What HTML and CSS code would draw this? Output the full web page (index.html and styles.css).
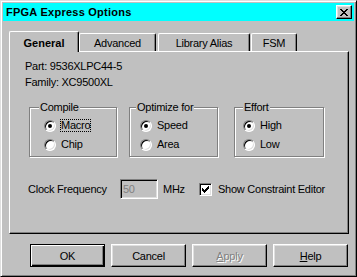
FILE: index.html
```html
<!DOCTYPE HTML>
<html>

<head>
    <meta charset="utf-8">
    <link rel="stylesheet" href="styles.css">
</head>

<body>
    <div class="window">
        <div class="titlebar">
            <span class="title">FPGA Express Options</span>
            <span class="close-btn">
                <svg width="8" height="7" viewBox="0 0 8 7">
                    <path d="M0 0h2v1H0z M6 0h2v1H6z M1 1h2v1H1z M5 1h2v1H5z M2 2h4v1H2z M3 3h2v1H3z M2 4h4v1H2z M1 5h2v1H1z M5 5h2v1H5z M0 6h2v1H0z M6 6h2v1H6z" fill="#000"/>
                </svg>
            </span>
        </div>

        <div class="tabs">
            <span class="tab tab-on">General</span>
            <span class="tab tab-adv">Advanced</span>
            <span class="tab tab-lib">Library Alias</span>
            <span class="tab tab-fsm">FSM</span>
        </div>

        <div class="panel">
            <div class="info">
                <div>Part: 9536XLPC44-5</div>
                <div>Family: XC9500XL</div>
            </div>

            <div class="groups">
                <div class="group g-compile">
                    <span class="group-label">Compile</span>
                    <div class="opt"><span class="radio on"></span><span class="opt-text focus">Macro</span></div>
                    <div class="opt"><span class="radio"></span><span class="opt-text">Chip</span></div>
                </div>
                <div class="group g-opt">
                    <span class="group-label">Optimize for</span>
                    <div class="opt"><span class="radio on"></span><span class="opt-text">Speed</span></div>
                    <div class="opt"><span class="radio"></span><span class="opt-text">Area</span></div>
                </div>
                <div class="group g-effort">
                    <span class="group-label">Effort</span>
                    <div class="opt"><span class="radio on"></span><span class="opt-text">High</span></div>
                    <div class="opt"><span class="radio"></span><span class="opt-text">Low</span></div>
                </div>
            </div>

            <div class="freq">
                <span class="freq-label">Clock Frequency</span>
                <span class="edit">50</span>
                <span class="unit">MHz</span>
                <span class="check">
                    <svg width="7" height="7" viewBox="0 0 7 7">
                        <path d="M6 0h1v1H6z M5 1h2v1H5z M0 2h1v1H0z M4 2h3v1H4z M0 3h2v1H0z M3 3h3v1H3z M0 4h5v1H0z M1 5h3v1H1z M2 6h1v1H2z" fill="#000"/>
                    </svg>
                </span>
                <span class="check-text">Show Constraint Editor</span>
            </div>
        </div>

        <div class="buttons">
            <button class="btn btn-default">OK</button>
            <button class="btn">Cancel</button>
            <button class="btn btn-off"><u>A</u>pply</button>
            <button class="btn"><u>H</u>elp</button>
        </div>
    </div>
</body>

</html>
```

FILE: styles.css
```css
body {
    margin: 0;
    font-family: "Liberation Sans", Arial, sans-serif;
    font-size: 11px;
    letter-spacing: -0.25px;
    color: #000;
}

.window {
    width: 357px;
    height: 277px;
    box-sizing: border-box;
    background: #c0c0c0;
    border: 1px solid;
    border-color: #dfdfdf #000 #000 #dfdfdf;
    box-shadow: inset 1px 1px #fff, inset -1px -1px #808080;
    padding: 2px;
}

/* title bar */
.titlebar {
    height: 18px;
    background: #0ff;
    display: flex;
    align-items: center;
    justify-content: space-between;
    padding: 0 2px 0 3px;
}
.title {
    font-weight: bold;
    letter-spacing: 0.25px;
}
.close-btn {
    width: 16px;
    height: 14px;
    box-sizing: border-box;
    background: #c0c0c0;
    border: 1px solid;
    border-color: #fff #000 #000 #fff;
    box-shadow: inset -1px -1px #808080, inset 1px 1px #dfdfdf;
    display: flex;
    align-items: center;
    justify-content: center;
}

/* tabs */
.tabs {
    display: flex;
    align-items: flex-end;
    height: 20px;
    margin: 10px 0 0 6px;
}
.tab {
    height: 18px;
    box-sizing: border-box;
    padding-top: 1px;
    border: 1px solid;
    border-bottom: 0;
    border-color: #fff #000 #000 #fff;
    border-radius: 2px 2px 0 0;
    box-shadow: inset -1px 0 #808080;
    display: flex;
    align-items: center;
    justify-content: center;
}
.tab-on {
    width: 70px;
    height: 21px;
    padding-top: 2px;
    margin-bottom: -1px;
    position: relative;
    z-index: 1;
    background: #c0c0c0;
    font-weight: bold;
    letter-spacing: 0;
}
.tab-adv {
    width: 77px;
}
.tab-lib {
    width: 92px;
    margin-left: 2px;
}
.tab-fsm {
    width: 46px;
    margin-left: 1px;
}

.panel {
    width: 340px;
    height: 183px;
    box-sizing: border-box;
    margin-left: 6px;
    border: 1px solid;
    border-color: #fff #000 #000 #fff;
    box-shadow: inset -1px -1px #808080;
}

.info {
    padding: 6px 0 0 15px;
    line-height: 16px;
}

/* group boxes */
.groups {
    display: flex;
    margin-top: 17px;
}
.group {
    position: relative;
    height: 50px;
    box-sizing: border-box;
    border: 1px solid #808080;
    box-shadow: inset 1px 1px #fff, 1px 1px #fff;
    padding-top: 8px;
}
.group-label {
    position: absolute;
    top: -7px;
    line-height: 13px;
    padding: 0 1px;
    background: #c0c0c0;
}
.g-compile {
    width: 88px;
    margin-left: 19px;
    padding-left: 14px;
}
.g-compile .group-label {
    left: 9px;
}
.g-opt {
    width: 89px;
    margin-left: 12px;
    padding-left: 10px;
}
.g-opt .group-label {
    left: 6px;
}
.g-effort {
    width: 90px;
    margin-left: 16px;
    padding-left: 8px;
}
.g-effort .group-label {
    left: 8px;
}

.opt {
    display: flex;
    align-items: center;
    height: 19px;
    gap: 4px;
}
.opt-text {
    line-height: 11px;
    border: 1px solid transparent;
}
.opt-text.focus {
    border: 1px dotted #000;
}
.radio {
    position: relative;
    width: 12px;
    height: 12px;
    box-sizing: border-box;
    border-radius: 50%;
    border: 1px solid;
    border-color: #808080 #fff #fff #808080;
    background: #fff;
    box-shadow: inset 1px 1px #000, inset -1px -1px #dfdfdf;
}
.radio.on::after {
    content: "";
    position: absolute;
    left: 3px;
    top: 3px;
    width: 4px;
    height: 4px;
    border-radius: 50%;
    background: #000;
}

/* clock frequency row */
.freq {
    display: flex;
    align-items: center;
    height: 20px;
    margin-top: 22px;
    padding-left: 18px;
}
.freq-label {
    width: 92px;
}
.edit {
    width: 38px;
    height: 20px;
    box-sizing: border-box;
    padding-left: 2px;
    line-height: 18px;
    color: #808080;
    border: 1px solid;
    border-color: #808080 #fff #fff #808080;
    box-shadow: inset 1px 1px #000, inset -1px -1px #dfdfdf;
}
.unit {
    width: 36px;
    margin-left: 5px;
}
.check {
    width: 13px;
    height: 13px;
    box-sizing: border-box;
    background: #fff;
    border: 1px solid;
    border-color: #808080 #fff #fff #808080;
    box-shadow: inset 1px 1px #000, inset -1px -1px #dfdfdf;
    display: flex;
    align-items: center;
    justify-content: center;
}
.check-text {
    margin-left: 6px;
}

/* buttons */
.buttons {
    display: flex;
    gap: 6px;
    margin: 10px 0 0 27px;
}
.btn {
    width: 75px;
    height: 23px;
    box-sizing: border-box;
    padding: 0;
    font: inherit;
    letter-spacing: inherit;
    color: #000;
    background: #c0c0c0;
    border: 1px solid;
    border-color: #fff #000 #000 #fff;
    box-shadow: inset -1px -1px #808080, inset 1px 1px #dfdfdf;
}
.btn-default {
    border-color: #000;
    box-shadow: inset 1px 1px #fff, inset -1px -1px #000, inset -2px -2px #808080;
}
.btn-off {
    color: #808080;
    text-shadow: 1px 1px #fff;
}
```
